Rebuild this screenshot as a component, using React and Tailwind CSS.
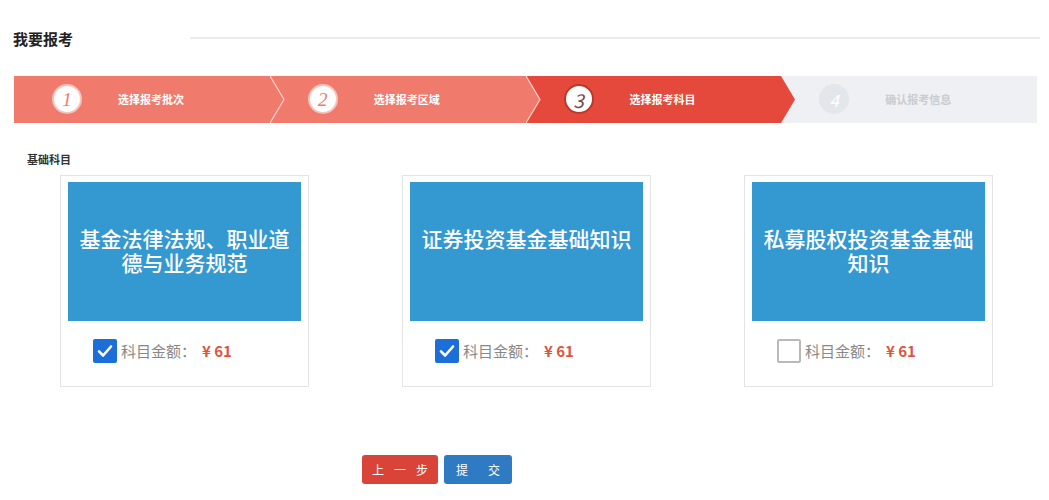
import React from 'react';

const steps = [
  { num: '1', label: '选择报考批次', state: 'done' },
  { num: '2', label: '选择报考区域', state: 'done' },
  { num: '3', label: '选择报考科目', state: 'active' },
  { num: '4', label: '确认报考信息', state: 'todo' },
];

const subjects = [
  { name: '基金法律法规、职业道德与业务规范', checked: true },
  { name: '证券投资基金基础知识', checked: true },
  { name: '私募股权投资基金基础知识', checked: false },
];

function StepArrow({ fill, line }) {
  return (
    <svg className="absolute left-full top-0 z-10" width="16" height="47" viewBox="0 0 16 47">
      <polygon points="0,0 14,23.5 0,47" fill={fill} />
      {line && <polyline points="0,0 14,23.5 0,47" fill="none" stroke={line} strokeWidth="1.2" />}
    </svg>
  );
}

function Step({ step, next }) {
  const bg = step.state === 'done' ? 'bg-[#f07a6c]' : step.state === 'active' ? 'bg-[#e5493b]' : 'bg-[#eef0f3]';
  const fill = step.state === 'done' ? '#f07a6c' : '#e5493b';
  return (
    <div className={`relative flex-1 h-full flex items-center pl-[38px] ${bg}`}>
      {step.state === 'done' && (
        <div className="w-[30px] h-[30px] rounded-full bg-white border-2 border-[#f7c2ba] flex items-center justify-center">
          <span className="text-[19px] italic text-[#f07a6c] font-['Liberation_Serif',serif] leading-none">{step.num}</span>
        </div>
      )}
      {step.state === 'active' && (
        <div className="w-[30px] h-[30px] rounded-full bg-white border-2 border-[#b8392d] flex items-center justify-center">
          <span className="text-[19px] italic text-[#7a4a44] leading-none">{step.num}</span>
        </div>
      )}
      {step.state === 'todo' && (
        <div className="w-[30px] h-[30px] rounded-full bg-[#e3e6ea] flex items-center justify-center">
          <span className="text-[17px] italic text-white leading-none">{step.num}</span>
        </div>
      )}
      <span className={`ml-[36px] text-[11px] font-bold ${step.state === 'todo' ? 'text-[#c9ccd1]' : 'text-white'}`}>
        {step.label}
      </span>
      {next && step.state !== 'todo' && (
        <StepArrow fill={fill} line={step.state === 'done' ? '#fbd3cd' : null} />
      )}
    </div>
  );
}

export default function App() {
  return (
    <div className="w-[1049px] h-[500px] bg-white overflow-hidden font-['Noto_Sans_CJK_SC','Noto_Sans',sans-serif] text-[#333]">
      {/* Header */}
      <div className="flex items-center pt-[28px] pl-[13px] pr-[9px]">
        <h1 className="text-[15px] font-bold text-[#222] w-[177px]">我要报考</h1>
        <div className="flex-1 h-[2px] bg-[#ececec] -mt-[2px]"></div>
      </div>

      {/* Stepper */}
      <div className="mt-[25px] mx-[14px] w-[1023px] h-[47px] flex">
        {steps.map((s, i) => (
          <Step key={s.num} step={s} next={i < steps.length - 1} />
        ))}
      </div>

      {/* Subjects */}
      <div className="pl-[27px] mt-[28px] text-[11px] font-bold text-[#333]">基础科目</div>

      <div className="flex gap-[93px] pl-[60px] mt-[8px]">
        {subjects.map((s) => (
          <div key={s.name} className="w-[249px] h-[212px] border border-[#e3e3e3] bg-white px-[7px] pt-[6px]">
            <div className="h-[139px] bg-[#3498d1] px-[6px] pt-[44px] text-center text-white text-[21px] font-medium leading-[24px]">
              {s.name}
            </div>
            <div className="flex items-center pl-[25px] mt-[18px]">
              {s.checked ? (
                <div className="w-[24px] h-[24px] rounded-[2px] bg-[#1c6fd8] flex items-center justify-center">
                  <svg width="18" height="18" viewBox="0 0 24 24" fill="none" stroke="white" strokeWidth="3.5" strokeLinecap="round" strokeLinejoin="round">
                    <polyline points="4,12.5 9.5,18 20,6" />
                  </svg>
                </div>
              ) : (
                <div className="w-[24px] h-[24px] rounded-[2px] border-2 border-[#b9b9b9] bg-white"></div>
              )}
              <span className="ml-[4px] text-[15px] text-[#888]">科目金额：</span>
              <span className="ml-[6px] text-[15px] font-bold text-[#e0533f]">¥ 61</span>
            </div>
          </div>
        ))}
      </div>

      {/* Buttons */}
      <div className="flex gap-[6px] pl-[362px] mt-[68px]">
        <button className="w-[76px] h-[29px] rounded-[3px] bg-[#da4438] text-white text-[12px] flex items-center justify-center gap-[10px]">
          <span>上</span><span>一</span><span>步</span>
        </button>
        <button className="w-[68px] h-[29px] rounded-[3px] bg-[#2f7bc3] text-white text-[12px] flex items-center justify-center gap-[20px]">
          <span>提</span><span>交</span>
        </button>
      </div>
    </div>
  );
}
